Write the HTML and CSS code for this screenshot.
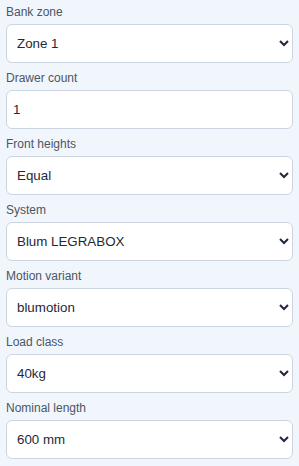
FILE: index.html
```html
<!DOCTYPE html>
<html lang="en">

<head>
    <meta charset="UTF-8">
    <meta name="viewport" content="width=device-width, initial-scale=1.0">
    <title>Drawer bank</title>

    <link rel="stylesheet" href="styles.css">
</head>

<body>
    <form class="panel">
        <div class="field">
            <label for="bankZone">Bank zone</label>
            <select id="bankZone">
                <option>Zone 1</option>
                <option>Zone 2</option>
            </select>
        </div>

        <div class="field">
            <label for="drawerCount">Drawer count</label>
            <input id="drawerCount" type="text" value="1">
        </div>

        <div class="field">
            <label for="frontHeights">Front heights</label>
            <select id="frontHeights">
                <option>Equal</option>
                <option>Custom</option>
            </select>
        </div>

        <div class="field">
            <label for="system">System</label>
            <select id="system">
                <option>Blum LEGRABOX</option>
                <option>Blum TANDEMBOX</option>
            </select>
        </div>

        <div class="field">
            <label for="motionVariant">Motion variant</label>
            <select id="motionVariant">
                <option>blumotion</option>
                <option>tip-on</option>
            </select>
        </div>

        <div class="field">
            <label for="loadClass">Load class</label>
            <select id="loadClass">
                <option>40kg</option>
                <option>70kg</option>
            </select>
        </div>

        <div class="field">
            <label for="nominalLength">Nominal length</label>
            <select id="nominalLength">
                <option>600 mm</option>
                <option>550 mm</option>
            </select>
        </div>
    </form>
</body>

</html>
```

FILE: styles.css
```css
:root {
    --background: #f1f6fd;
    --border: #cbd5e1;
    --label: #4b5563;
    --text: #1f2937;
}

* {
    margin: 0;
    padding: 0;
    box-sizing: border-box;
    font-family: "Liberation Sans", Arial, sans-serif;
}

body {
    background-color: var(--background);
}

.panel {
    display: flex;
    flex-direction: column;
    gap: 8px;
    padding: 5px 6px;
}

.field {
    display: flex;
    flex-direction: column;
    gap: 4px;
}

.field label {
    font-size: 12px;
    line-height: 15px;
    color: var(--label);
}

.field select,
.field input {
    height: 39px;
    width: 100%;
    padding: 0 6px;
    font-size: 13.333px;
    color: var(--text);
    background-color: white;
    border: 1px solid var(--border);
    border-radius: 6px;
    outline: 0;
}
```
